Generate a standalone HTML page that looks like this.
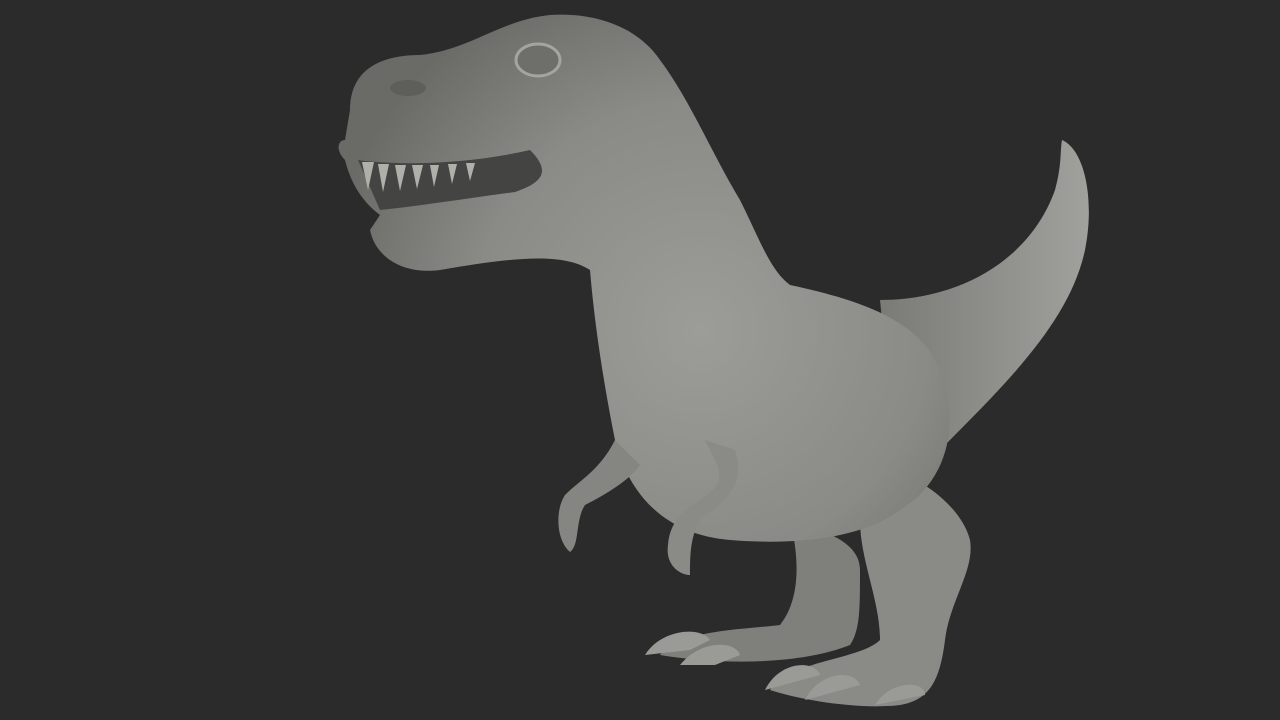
<!DOCTYPE html>
<html><head><meta charset="utf-8"><style>
html,body{margin:0;padding:0;background:#2b2b2c;width:1280px;height:720px;overflow:hidden}
svg{display:block}
</style></head><body>
<svg width="1280" height="720" viewBox="0 0 1280 720">
<defs>
<radialGradient id="g" gradientUnits="userSpaceOnUse" cx="700" cy="330" r="380">
<stop offset="0" stop-color="#9c9c98"/>
<stop offset="0.6" stop-color="#8a8a86"/>
<stop offset="1" stop-color="#6a6a67"/>
</radialGradient>
<linearGradient id="t" x1="0" y1="0" x2="1" y2="0">
<stop offset="0" stop-color="#7a7a76"/><stop offset="1" stop-color="#a0a09c"/>
</linearGradient>
</defs>
<rect width="1280" height="720" fill="#2b2b2c"/>
<path d="M880,300 C960,300 1030,260 1055,190 C1062,165 1060,150 1062,140 C1085,150 1095,200 1085,250 C1070,320 1010,380 940,450 L890,400 Z" fill="url(#t)"/>
<path d="M860,470 C900,460 960,500 970,540 C975,570 950,600 945,640 C940,680 930,700 900,705 C860,710 800,700 770,690 C790,660 860,660 880,640 C880,600 860,560 860,520 Z" fill="#8a8a86"/>
<path d="M790,520 C820,530 860,540 860,570 C860,610 860,630 850,645 C800,665 720,665 660,655 C680,630 740,630 780,625 C800,600 800,560 790,520 Z" fill="#7f7f7b"/>
<path d="M350,110 C350,70 380,55 420,55 C470,50 500,20 550,15 C600,12 640,30 660,60 C690,100 710,150 740,200 C760,240 770,270 790,285 C860,300 920,320 940,370 C960,420 950,480 900,510 C860,540 790,545 730,540 C670,535 630,500 615,440 C605,390 595,330 590,270 C560,250 500,260 440,270 C400,275 375,255 370,230 L380,215 C360,200 350,180 345,160 C335,150 338,140 345,140 Z" fill="url(#g)"/>
<path d="M358,160 C400,166 470,164 530,150 C550,170 545,182 515,192 C470,198 420,206 380,210 Z" fill="#444442"/>
<g fill="#b0b0ab">
<path d="M362,162 l6,28 l6,-28z M378,164 l5,28 l6,-28z M395,165 l5,26 l6,-26z M412,165 l5,24 l6,-24z M430,165 l4,22 l5,-22z M448,164 l4,20 l5,-20z M466,163 l4,18 l5,-18z"/>
</g>
<ellipse cx="538" cy="60" rx="22" ry="16" fill="#6e6e6a" stroke="#a4a4a0" stroke-width="3"/>
<ellipse cx="408" cy="88" rx="18" ry="8" fill="#5e5e5a"/>
<path d="M615,440 C600,470 580,480 565,495 C555,510 556,540 570,552 C580,545 575,520 585,505 C605,495 630,480 640,465 Z" fill="#858581"/>
<path d="M705,440 C720,470 730,480 700,500 C685,510 670,520 668,545 C665,565 680,575 690,575 C690,555 690,530 705,515 C730,500 745,480 735,450 Z" fill="#8a8a86"/>
<path d="M645,655 C660,630 700,625 710,640 L690,650 Z" fill="#9a9a96"/>
<path d="M680,665 C700,640 735,640 740,655 L715,665 Z" fill="#9a9a96"/>
<path d="M765,690 C780,660 815,660 820,675 Z" fill="#9a9a96"/>
<path d="M805,700 C820,670 855,670 860,685 Z" fill="#9a9a96"/>
<path d="M875,705 C890,680 925,680 925,695 Z" fill="#9a9a96"/>
</svg>
</body></html>
